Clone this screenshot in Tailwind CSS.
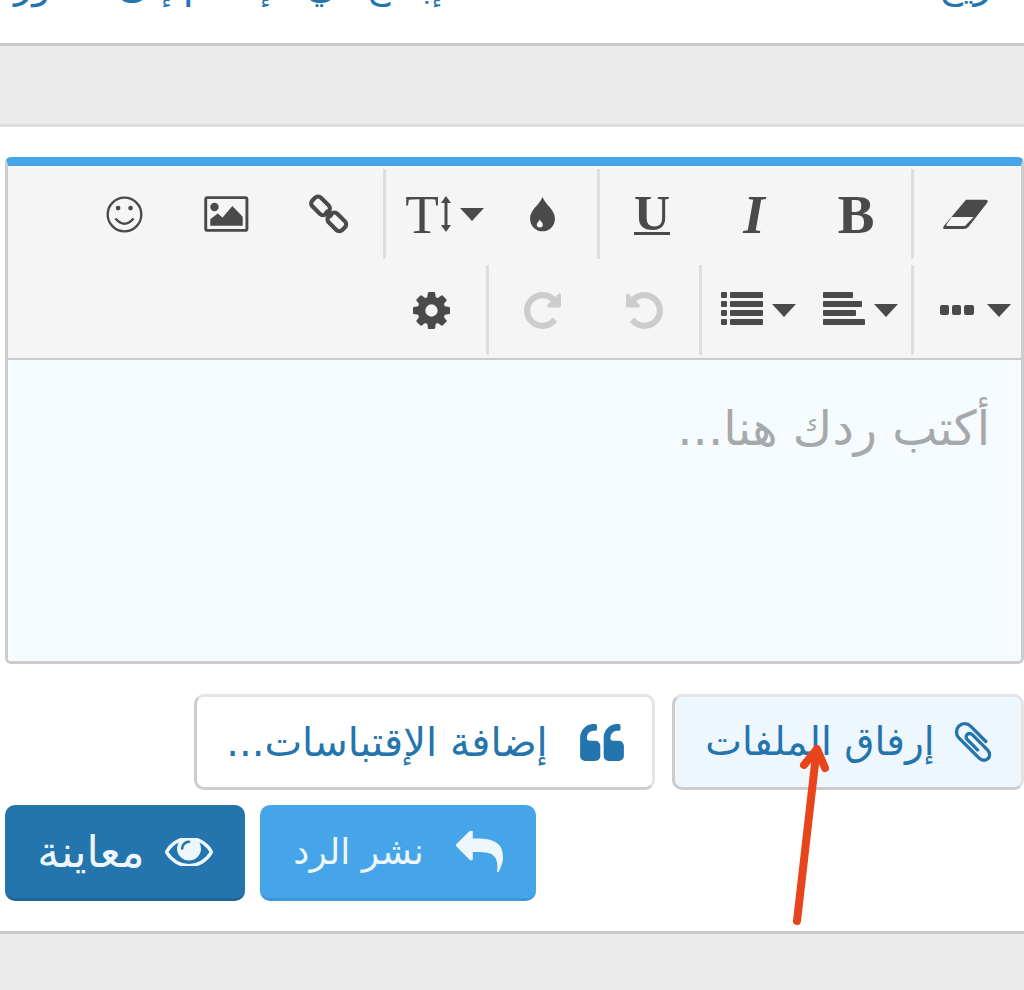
<!DOCTYPE html>
<html lang="ar" dir="rtl">
<head>
    <meta charset="UTF-8">
    <meta name="viewport" content="width=device-width, initial-scale=1.0">
    <title>Reply editor</title>
    <script src="https://cdn.jsdelivr.net/npm/@tailwindcss/browser@4"></script>
</head>
<body class="bg-white overflow-hidden">
    <div class="relative h-[990px] w-[1024px] overflow-hidden font-['DejaVu_Sans',sans-serif] text-[#2474ad]">

        <!-- Clipped row at the top of the page -->
        <div class="h-[46px] overflow-hidden border-b-[3px] border-[#c8c8c8]">
            <div class="-mt-[36px] flex justify-between pr-[10px] pl-[14px] text-[38px] leading-[42px]">
                <span>تاريخ</span>
                <span>إبداع في الإسلام إلى هنا ور</span>
            </div>
        </div>
        <div class="h-[81px] border-b-[3px] border-[#dedede] bg-[#ebebeb]"></div>

        <!-- Editor -->
        <div class="ml-[5px] mt-[30px] overflow-hidden rounded-[6px] border-[3px] border-t-[9px] border-[#ccc] border-t-[#45a5e8]">
            <div class="border-b-[2px] border-[#ccc] bg-[#f5f5f5] pr-[4px] text-[#4a4a4a]">

                <!-- Row 1 -->
                <div class="flex h-[96px] items-center">
                    <div class="flex h-full w-[102px] items-center justify-center">
                        <svg width="50" height="34" viewBox="1290 110 150 102" fill="#4a4a4a"><path fill-rule="evenodd" d="M1365 118H1422Q1435 118 1428 128L1372 200Q1367 206 1358 206H1303Q1292 206 1299 196ZM1322 170H1388L1362 197H1309Q1304 197 1307 192Z"/></svg>
                    </div>
                    <div class="ms-[1px] me-[4px] h-[90px] w-[3px] bg-[#dedede]"></div>
                    <div class="flex h-full w-[102px] items-center justify-center font-['Liberation_Serif',serif] text-[55px] leading-none font-bold">B</div>
                    <div class="flex h-full w-[102px] items-center justify-center font-['Liberation_Serif',serif] text-[55px] leading-none font-bold italic">I</div>
                    <div class="flex h-full w-[102px] items-center justify-center">
                        <span class="border-b-[3px] border-[#4a4a4a] font-['Liberation_Serif',serif] text-[50px] leading-[38px] font-bold">U</span>
                    </div>
                    <div class="ms-[1px] me-[4px] h-[90px] w-[3px] bg-[#dedede]"></div>
                    <div class="flex h-full w-[102px] items-center justify-center">
                        <svg width="27" height="37" viewBox="50 100 80 110" fill="#4a4a4a"><path fill-rule="evenodd" d="M90 103C100 128 127 140 127 168A37 37 0 0 1 53 168C53 140 80 128 90 103ZM82 170C79 176 73 180 73 185A9 9 0 0 0 91 185C91 180 85 176 82 170Z"/></svg>
                    </div>
                    <div class="flex h-full w-[102px] items-center justify-center pl-[9px]" dir="ltr">
                        <span class="font-['Liberation_Serif',serif] text-[55px] leading-none">T</span>
                        <svg class="ml-[2px]" width="10" height="36" viewBox="0 0 10 36" fill="#4a4a4a"><path d="M5 0L10 7H6.5V29H10L5 36L0 29H3.5V7H0Z"/></svg>
                        <svg class="ml-[9px]" width="24" height="13" viewBox="0 0 24 13" fill="#4a4a4a"><path d="M0 0H24L12 13Z"/></svg>
                    </div>
                    <div class="ms-[3px] me-[4px] h-[90px] w-[3px] bg-[#dedede]"></div>
                    <div class="flex h-full w-[102px] items-center justify-center">
                        <svg class="ml-[2px]" width="40" height="40" viewBox="40 35 125 125" fill="none" stroke="#4a4a4a" stroke-width="13"><rect x="46" y="53" width="60" height="38" rx="13" transform="rotate(45 76 72)"/><rect x="97" y="103" width="60" height="38" rx="13" transform="rotate(45 127 122)"/><path d="M91 87L112 107"/></svg>
                    </div>
                    <div class="flex h-full w-[102px] items-center justify-center">
                        <svg width="46" height="36" viewBox="606 106 139 111"><rect x="613" y="111" width="127" height="101" rx="5" fill="none" stroke="#4a4a4a" stroke-width="9"/><circle cx="640" cy="140" r="13" fill="#4a4a4a"/><path d="M627 198V178L650 160L665 172L695 137L727 170V198Z" fill="#4a4a4a"/></svg>
                    </div>
                    <div class="flex h-full w-[102px] items-center justify-center">
                        <svg width="37" height="37" viewBox="320 107 110 110"><circle cx="375" cy="162" r="50" fill="none" stroke="#4a4a4a" stroke-width="7"/><circle cx="356" cy="143" r="7" fill="#4a4a4a"/><circle cx="393" cy="143" r="7" fill="#4a4a4a"/><path d="M348 174Q375 205 402 174" fill="none" stroke="#4a4a4a" stroke-width="7"/></svg>
                    </div>
                </div>

                <!-- Row 2 -->
                <div class="flex h-[96px] items-center">
                    <div class="flex h-full w-[102px] items-center justify-center pl-[18px]" dir="ltr">
                        <svg width="34" height="10" viewBox="0 0 34 10" fill="#4a4a4a"><rect width="9" height="10" rx="2"/><rect x="12" width="9" height="10" rx="2"/><rect x="24" width="10" height="10" rx="2"/></svg>
                        <svg class="ml-[13px]" width="24" height="13" viewBox="0 0 24 13" fill="#4a4a4a"><path d="M0 0H24L12 13Z"/></svg>
                    </div>
                    <div class="ms-[1px] me-[4px] h-[90px] w-[3px] bg-[#dedede]"></div>
                    <div class="flex h-full w-[102px] items-center justify-center pl-[9px]" dir="ltr">
                        <svg class="mb-[3px]" width="42" height="33" viewBox="0 0 42 33" fill="#4a4a4a"><rect width="30" height="6" rx="1"/><rect y="9" width="39" height="6" rx="1"/><rect y="18" width="33" height="6" rx="1"/><rect y="27" width="42" height="6" rx="1"/></svg>
                        <svg class="ml-[9px]" width="24" height="13" viewBox="0 0 24 13" fill="#4a4a4a"><path d="M0 0H24L12 13Z"/></svg>
                    </div>
                    <div class="flex h-full w-[102px] items-center justify-center pl-[9px]" dir="ltr">
                        <svg class="mb-[3px]" width="42" height="33" viewBox="0 0 42 33" fill="#4a4a4a"><rect width="6" height="6" rx="1"/><rect x="9" width="33" height="6" rx="1"/><rect y="9" width="6" height="6" rx="1"/><rect x="9" y="9" width="33" height="6" rx="1"/><rect y="18" width="6" height="6" rx="1"/><rect x="9" y="18" width="33" height="6" rx="1"/><rect y="27" width="6" height="6" rx="1"/><rect x="9" y="27" width="33" height="6" rx="1"/></svg>
                        <svg class="ml-[9px]" width="24" height="13" viewBox="0 0 24 13" fill="#4a4a4a"><path d="M0 0H24L12 13Z"/></svg>
                    </div>
                    <div class="ms-[1px] me-[4px] h-[90px] w-[3px] bg-[#dedede]"></div>
                    <div class="flex h-full w-[102px] items-center justify-center">
                        <svg width="37" height="37" viewBox="0 0 1536 1536" fill="#ccc"><path d="M1536 768q0 156-61 298t-164 245-245 164-298 61q-172 0-327-72.500t-264-204.500q-7-10-6.500-22.500t8.500-20.500l137-138q10-9 25-9 16 2 23 12 73 95 179 147t225 52q104 0 198.500-40.500t163.500-109.500 109.500-163.500 40.500-198.500-40.500-198.500-109.500-163.500-163.500-109.500-198.500-40.500q-98 0-188 35.500t-160 101.500l137 138q31 30 14 69-17 40-59 40h-448q-26 0-45-19t-19-45v-448q0-42 40-59 39-17 69 14l130 129q107-101 244.500-156.500t284.500-55.500q156 0 298 61t245 164 164 245 61 298z"/></svg>
                    </div>
                    <div class="flex h-full w-[102px] items-center justify-center">
                        <svg class="-scale-x-100" width="37" height="37" viewBox="0 0 1536 1536" fill="#ccc"><path d="M1536 768q0 156-61 298t-164 245-245 164-298 61q-172 0-327-72.500t-264-204.500q-7-10-6.500-22.500t8.500-20.500l137-138q10-9 25-9 16 2 23 12 73 95 179 147t225 52q104 0 198.500-40.500t163.500-109.500 109.500-163.500 40.500-198.500-40.500-198.500-109.500-163.500-163.500-109.500-198.500-40.500q-98 0-188 35.500t-160 101.500l137 138q31 30 14 69-17 40-59 40h-448q-26 0-45-19t-19-45v-448q0-42 40-59 39-17 69 14l130 129q107-101 244.500-156.500t284.500-55.500q156 0 298 61t245 164 164 245 61 298z"/></svg>
                    </div>
                    <div class="ms-[2px] me-[4px] h-[90px] w-[3px] bg-[#dedede]"></div>
                    <div class="flex h-full w-[102px] items-center justify-center">
                        <svg width="37" height="37" viewBox="0 0 1536 1536" fill="#4a4a4a"><path d="M1024 768q0-106-75-181t-181-75-181 75-75 181 75 181 181 75 181-75 75-181zm512-109v222q0 12-8 23t-20 13l-185 28q-19 54-39 91 35 50 107 138 10 12 10 25t-9 23q-27 37-99 108t-94 71q-12 0-26-9l-138-108q-44 23-91 38-16 136-29 186-7 28-36 28h-222q-14 0-24.500-8.500t-11.500-21.500l-28-184q-49-16-90-37l-141 107q-10 9-25 9-14 0-25-11-126-114-165-168-7-10-7-23 0-12 8-23 15-21 51-66.500t54-70.500q-27-50-41-99l-183-27q-13-2-21-12.500t-8-23.500v-222q0-12 8-23t19-13l186-28q14-46 39-92-40-57-107-138-10-12-10-24 0-10 9-23 26-36 98.500-107.500t94.500-71.500q13 0 26 10l138 107q44-23 91-38 16-136 29-186 7-28 36-28h222q14 0 24.500 8.500t11.500 21.500l28 184q49 16 90 37l142-107q9-9 24-9 13 0 25 10 129 119 165 170 7 8 7 22 0 12-8 23-15 21-51 66.500t-54 70.500q26 50 41 98l183 28q13 2 21 12.500t8 23.500z"/></svg>
                    </div>
                </div>
            </div>

            <!-- Text area -->
            <div class="h-[301px] bg-[#f5fbff] pr-[31px] pt-[36px] text-[48px] leading-[64px] text-[#a5a9ab]">أكتب ردك هنا...</div>
        </div>

        <!-- Attachment and quote buttons -->
        <div class="mt-[30px] flex gap-[17px]">
            <div class="flex h-[96px] w-[352px] items-center justify-center gap-[18px] rounded-[10px] border-[3px] border-[#e4e4e4] border-b-[#ccc] border-l-[#ccc] bg-[#eef7fd] pl-[2px] text-[39px]">
                <svg width="40" height="40" viewBox="128 128 1536 1536" fill="#2474ad"><path d="M1596 1385q0 117-79 196t-196 79q-135 0-235-100l-777-776q-113-115-113-271 0-159 110-270t269-111q158 0 273 113l605 606q10 10 10 22 0 16-30.500 46.500t-46.500 30.500q-13 0-23-10l-606-606q-79-77-181-77-106 0-179 75t-73 181q0 105 76 181l776 777q63 63 145 63 64 0 106-42t42-106q0-82-63-145l-581-581q-26-24-60-24-29 0-48 19t-19 48q0 32 25 59l410 410q10 10 10 22 0 16-31 47t-47 31q-12 0-22-10l-410-410q-63-61-63-149 0-82 57-139t139-57q88 0 149 63l581 581q100 98 100 235z"/></svg>
                <span>إرفاق الملفات</span>
            </div>
            <div class="flex h-[96px] w-[461px] items-center justify-center gap-[32px] rounded-[10px] border-[3px] border-[#e4e4e4] border-b-[#ccc] border-l-[#ccc] bg-white pl-[1px] text-[40px]">
                <svg width="44" height="37" viewBox="0 192 1664 1408" fill="#2474ad"><path d="M768 1024v384q0 80-56 136t-136 56h-384q-80 0-136-56t-56-136v-704q0-104 40.500-198.500t109.500-163.500 163.500-109.500 198.500-40.500h64q26 0 45 19t19 45v128q0 26-19 45t-45 19h-64q-106 0-181 75t-75 181v32q0 40 28 68t68 28h224q80 0 136 56t56 136zm896 0v384q0 80-56 136t-136 56h-384q-80 0-136-56t-56-136v-704q0-104 40.500-198.500t109.500-163.500 163.500-109.500 198.500-40.500h64q26 0 45 19t19 45v128q0 26-19 45t-45 19h-64q-106 0-181 75t-75 181v32q0 40 28 68t68 28h224q80 0 136 56t56 136z"/></svg>
                <span>إضافة الإقتباسات...</span>
            </div>
        </div>

        <!-- Submit and preview buttons -->
        <div class="mt-[15px] flex justify-end gap-[15px] pl-[5px]">
            <div class="flex h-[96px] w-[276px] items-center justify-center gap-[32px] rounded-[10px] border-b-[3px] border-[#3d97d6] bg-[#45a5e8] text-[36px] text-[#eef7fd]">
                <svg width="47" height="42" viewBox="0 128 1792 1536" fill="#eef7fd"><path d="M1792 1120q0 166-127 451-3 7-10.500 24t-13.500 30-13 22q-12 17-28 17-15 0-23.500-10t-8.500-25q0-9 2.500-26.500t2.500-23.500q5-68 5-123 0-101-17.500-181t-48.500-138.500-80-101-105.500-69.500-133-42.500-154-21.500-175.500-6h-224v256q0 26-19 45t-45 19-45-19l-512-512q-19-19-19-45t19-45l512-512q19-19 45-19t45 19 19 45v256h224q713 0 875 403 53 134 53 333z"/></svg>
                <span>نشر الرد</span>
            </div>
            <div class="flex h-[96px] w-[240px] items-center justify-center gap-[20px] rounded-[10px] border-b-[3px] border-[#1f6597] bg-[#2474ad] text-[44px] text-[#eef7fd]">
                <svg width="48" height="28" viewBox="0 448 1792 1024" fill="#eef7fd"><path d="M1664 960q-152-236-381-353 61 104 61 225 0 185-131.500 316.500t-316.500 131.500-316.500-131.500-131.500-316.500q0-121 61-225-229 117-381 353 133 205 333.500 326.500t434.500 121.500 434.500-121.500 333.500-326.500zm-720-384q0-20-14-34t-34-14q-125 0-214.500 89.500t-89.500 214.500q0 20 14 34t34 14 34-14 14-34q0-86 61-147t147-61q20 0 34-14t14-34zm848 384q0 34-20 69-140 230-376.500 368.500t-499.500 138.500-499.500-139-376.500-368q-20-35-20-69t20-69q140-229 376.500-368t499.500-139 499.500 139 376.500 368q20 35 20 69z"/></svg>
                <span>معاينة</span>
            </div>
        </div>

        <!-- Bottom band -->
        <div class="mt-[30px] h-[60px] border-t-[3px] border-[#c8c8c8] bg-[#ebebeb]"></div>

        <!-- Red annotation arrow -->
        <svg class="absolute top-[740px] left-[790px]" width="45" height="190" viewBox="790 740 45 190" fill="none" stroke="#e8451c" stroke-linecap="round" stroke-linejoin="round">
            <path d="M797 921L816 755" stroke-width="8"/>
            <path d="M804 765L817 749L825 768" stroke-width="8"/>
        </svg>
    </div>
</body>
</html>
